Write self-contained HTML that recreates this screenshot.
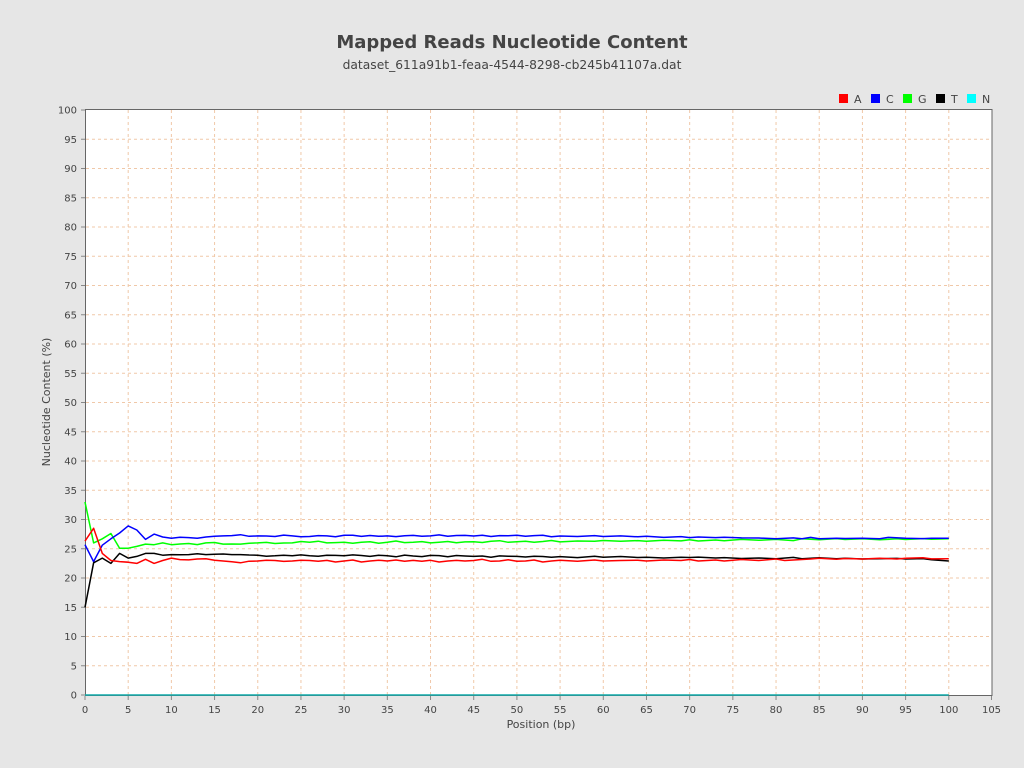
<!DOCTYPE html>
<html><head><meta charset="utf-8"><style>
html,body{margin:0;padding:0;background:#e6e6e6;}
svg{display:block;font-family:"DejaVu Sans","Liberation Sans",sans-serif;}
</style></head><body>
<svg width="1024" height="768" viewBox="0 0 1024 768" xmlns="http://www.w3.org/2000/svg">
<rect width="1024" height="768" fill="#e6e6e6"/>
<text x="512" y="48" text-anchor="middle" font-size="18" font-weight="bold" fill="#444">Mapped Reads Nucleotide Content</text>
<text x="512" y="69" text-anchor="middle" font-size="12.3" fill="#444">dataset_611a91b1-feaa-4544-8298-cb245b41107a.dat</text>
<g font-size="11" fill="#444">
<rect x="839" y="94" width="9" height="9" fill="#f00"/><text x="854" y="103">A</text>
<rect x="871" y="94" width="9" height="9" fill="#00f"/><text x="886" y="103">C</text>
<rect x="903" y="94" width="9" height="9" fill="#0f0"/><text x="918" y="103">G</text>
<rect x="936" y="94" width="9" height="9" fill="#000"/><text x="951" y="103">T</text>
<rect x="967" y="94" width="9" height="9" fill="#0ff"/><text x="982" y="103">N</text>
</g>
<rect x="85" y="109.5" width="907" height="586" fill="#fff"/>
<path stroke="#f0c8a8" stroke-width="1" stroke-dasharray="3,3" fill="none" d="M86 665.75H991M86 636.5H991M86 607.25H991M86 578H991M86 548.75H991M86 519.5H991M86 490.25H991M86 461H991M86 431.75H991M86 402.5H991M86 373.25H991M86 344H991M86 314.75H991M86 285.5H991M86 256.25H991M86 227H991M86 197.75H991M86 168.5H991M86 139.25H991
M128.19 110V695M171.38 110V695M214.57 110V695M257.76 110V695M300.95 110V695M344.14 110V695M387.33 110V695M430.52 110V695M473.71 110V695M516.9 110V695M560.09 110V695M603.28 110V695M646.47 110V695M689.66 110V695M732.85 110V695M776.04 110V695M819.23 110V695M862.42 110V695M905.61 110V695M948.8 110V695"/>
<rect x="85.5" y="109.5" width="906.5" height="586" fill="none" stroke="#666"/>
<path stroke="#888" fill="none" d="M81 695H85M81 665.75H85M81 636.5H85M81 607.25H85M81 578H85M81 548.75H85M81 519.5H85M81 490.25H85M81 461H85M81 431.75H85M81 402.5H85M81 373.25H85M81 344H85M81 314.75H85M81 285.5H85M81 256.25H85M81 227H85M81 197.75H85M81 168.5H85M81 139.25H85M81 110H85
M85 696V700M128.19 696V700M171.38 696V700M214.57 696V700M257.76 696V700M300.95 696V700M344.14 696V700M387.33 696V700M430.52 696V700M473.71 696V700M516.9 696V700M560.09 696V700M603.28 696V700M646.47 696V700M689.66 696V700M732.85 696V700M776.04 696V700M819.23 696V700M862.42 696V700M905.61 696V700M948.8 696V700M991.5 696V700"/>
<g font-size="10" fill="#444" text-anchor="end">
<text x="77" y="698.5">0</text><text x="77" y="669.25">5</text><text x="77" y="640">10</text><text x="77" y="610.75">15</text><text x="77" y="581.5">20</text><text x="77" y="552.25">25</text><text x="77" y="523">30</text><text x="77" y="493.75">35</text><text x="77" y="464.5">40</text><text x="77" y="435.25">45</text><text x="77" y="406">50</text><text x="77" y="376.75">55</text><text x="77" y="347.5">60</text><text x="77" y="318.25">65</text><text x="77" y="289">70</text><text x="77" y="259.75">75</text><text x="77" y="230.5">80</text><text x="77" y="201.25">85</text><text x="77" y="172">90</text><text x="77" y="142.75">95</text><text x="77" y="113.5">100</text>
</g>
<g font-size="10" fill="#444" text-anchor="middle">
<text x="85" y="713">0</text><text x="128.19" y="713">5</text><text x="171.38" y="713">10</text><text x="214.57" y="713">15</text><text x="257.76" y="713">20</text><text x="300.95" y="713">25</text><text x="344.14" y="713">30</text><text x="387.33" y="713">35</text><text x="430.52" y="713">40</text><text x="473.71" y="713">45</text><text x="516.9" y="713">50</text><text x="560.09" y="713">55</text><text x="603.28" y="713">60</text><text x="646.47" y="713">65</text><text x="689.66" y="713">70</text><text x="732.85" y="713">75</text><text x="776.04" y="713">80</text><text x="819.23" y="713">85</text><text x="862.42" y="713">90</text><text x="905.61" y="713">95</text><text x="948.8" y="713">100</text><text x="991.5" y="713">105</text>
</g>
<text x="50" y="402" text-anchor="middle" font-size="11" fill="#444" transform="rotate(-90 50 402)">Nucleotide Content (%)</text>
<text x="541" y="728" text-anchor="middle" font-size="11" fill="#444">Position (bp)</text>
<g fill="none" stroke-width="1.5" stroke-linejoin="round">
<polyline stroke="#0f0" points="85,502 93.6,542.9 102.3,538.8 110.9,533.5 119.6,548.2 128.2,548.2 136.8,546.4 145.5,544.1 154.1,544.7 162.7,542.9 171.4,544.7 180,544 188.7,543.5 197.3,544.6 205.9,542.9 214.6,542.5 223.2,544.1 231.8,544 240.5,544.1 249.1,543.2 257.8,542.9 266.4,542.4 275,543.5 283.7,543 292.3,542.9 300.9,541.5 309.6,542.3 318.2,541.2 326.9,542.9 335.5,542.6 344.1,542.3 352.8,543.3 361.4,542.3 370,541.8 378.7,543.2 387.3,542.3 396,541 404.6,542.6 413.2,542.3 421.9,541.6 430.5,542.9 439.1,542.3 447.8,541.5 456.4,542.8 465,541.9 473.7,541.7 482.3,542.5 491,541.2 499.6,540.7 508.2,542.3 516.9,541.7 525.5,541.2 534.1,542.2 542.8,541.5 551.4,540.5 560.1,541.9 577.4,541 594.6,541.3 603.3,540.5 620.6,541.2 637.8,540.6 646.5,541.3 663.8,540.2 681,540.9 689.7,539.8 698.3,541 715.6,540 724.2,540.7 741.5,539.4 758.8,540.3 776,539.4 793.3,540.6 802,538.8 819.2,539.8 836.5,538.6 845.1,539.5 862.4,538.8 879.7,539.8 896.9,538.8 905.6,539.5 922.9,538.6 931.5,539.2 948.8,538.8"/>
<polyline stroke="#00f" points="85,544.7 93.6,561.6 102.3,545.2 110.9,538.8 119.6,533 128.2,525.9 136.8,530 145.5,539.4 154.1,534.1 162.7,537 171.4,538.2 180,537.2 188.7,537.6 197.3,538.3 205.9,537 214.6,536.2 223.2,535.9 231.8,535.6 240.5,534.7 249.1,536.3 257.8,535.9 266.4,536 275,536.5 283.7,535.1 292.3,535.9 300.9,536.7 309.6,536.5 318.2,535.6 326.9,535.9 335.5,536.8 344.1,535.3 352.8,535.2 361.4,536.4 370,535.5 378.7,536.3 387.3,535.9 396,536.6 404.6,535.7 413.2,535.4 421.9,536.2 430.5,535.9 439.1,534.9 447.8,536.3 456.4,535.5 465,535.4 473.7,536 482.3,535.2 491,536.5 499.6,535.6 508.2,535.8 516.9,535.2 525.5,536.2 534.1,535.6 542.8,535.3 551.4,536.7 560.1,536 577.4,536.5 594.6,535.6 603.3,536.5 620.6,535.9 637.8,536.8 646.5,536.2 663.8,537.4 681,536.6 689.7,537.6 698.3,537 715.6,537.6 724.2,537.2 741.5,537.9 758.8,538 776,538.8 793.3,537.9 802,538.8 810.6,537.4 819.2,538.8 836.5,538.2 845.1,538.5 862.4,538.2 879.7,538.8 888.3,537.4 905.6,538.2 922.9,538.6 931.5,538.2 948.8,538.2"/>
<polyline stroke="#000" points="85,607.3 93.6,562.8 102.3,558.1 110.9,563.4 119.6,553.4 128.2,558.1 136.8,556.4 145.5,553.4 154.1,553.4 162.7,555.2 171.4,554.6 180,554.8 188.7,554.6 197.3,553.8 205.9,554.6 214.6,554.2 223.2,554 231.8,554.6 240.5,554.6 249.1,555 257.8,555.2 266.4,556.2 275,555.8 283.7,555.2 292.3,555.8 300.9,554.9 309.6,555.8 318.2,556.3 326.9,555.2 335.5,555.4 344.1,555.8 352.8,554.9 361.4,555.5 370,556.4 378.7,555.3 387.3,555.8 396,556.8 404.6,555.1 413.2,556 421.9,556.6 430.5,555.4 439.1,555.6 447.8,556.8 456.4,555.5 465,556 473.7,556.4 482.3,556 491,557.3 499.6,555.9 508.2,556.2 516.9,556.4 525.5,557 534.1,556.2 542.8,556.5 551.4,557.2 560.1,556.6 577.4,557.6 594.6,556.3 603.3,557.2 620.6,556.5 637.8,557.5 646.5,557.2 663.8,558 681,557.3 689.7,557.5 698.3,557.1 715.6,558 724.2,557.6 741.5,558.5 758.8,558 776,558.7 793.3,557.4 802,558.7 819.2,557.8 836.5,558.8 845.1,558.3 862.4,559 879.7,558.7 896.9,558.4 905.6,559 922.9,558.6 931.5,559.8 948.8,561"/>
<polyline stroke="#f00" points="85,541.1 93.6,528.3 102.3,553.4 110.9,560.5 119.6,561.6 128.2,562.2 136.8,563.4 145.5,559.3 154.1,563.4 162.7,560.5 171.4,558.1 180,559.6 188.7,559.9 197.3,559 205.9,558.7 214.6,560.2 223.2,561 231.8,561.8 240.5,562.8 249.1,561.2 257.8,561 266.4,560.2 275,560.5 283.7,561.4 292.3,561 300.9,560.2 309.6,560.5 318.2,561.2 326.9,560.4 335.5,562 344.1,561 352.8,560 361.4,562 370,561 378.7,560.2 387.3,561 396,560 404.6,561.2 413.2,560.4 421.9,561.2 430.5,560.3 439.1,562 447.8,561 456.4,560.4 465,561 473.7,560.5 482.3,559.3 491,561.3 499.6,561 508.2,559.7 516.9,561.2 525.5,561 534.1,560 542.8,562 551.4,561 560.1,560.3 577.4,561.3 594.6,560 603.3,561 620.6,560.5 637.8,560.2 646.5,561 663.8,560 681,560.5 689.7,559.5 698.3,561 715.6,560 724.2,561 741.5,559.5 758.8,560.5 776,559 784.7,560.5 802,559.5 810.6,559 819.2,558.3 836.5,559.3 845.1,558.5 862.4,559 879.7,558.3 896.9,559 905.6,558.2 922.9,557.8 931.5,558.9 948.8,558.7"/>
<line x1="85" y1="695" x2="948.8" y2="695" stroke="#1aa" stroke-width="1.5"/>
</g>
</svg>
</body></html>
